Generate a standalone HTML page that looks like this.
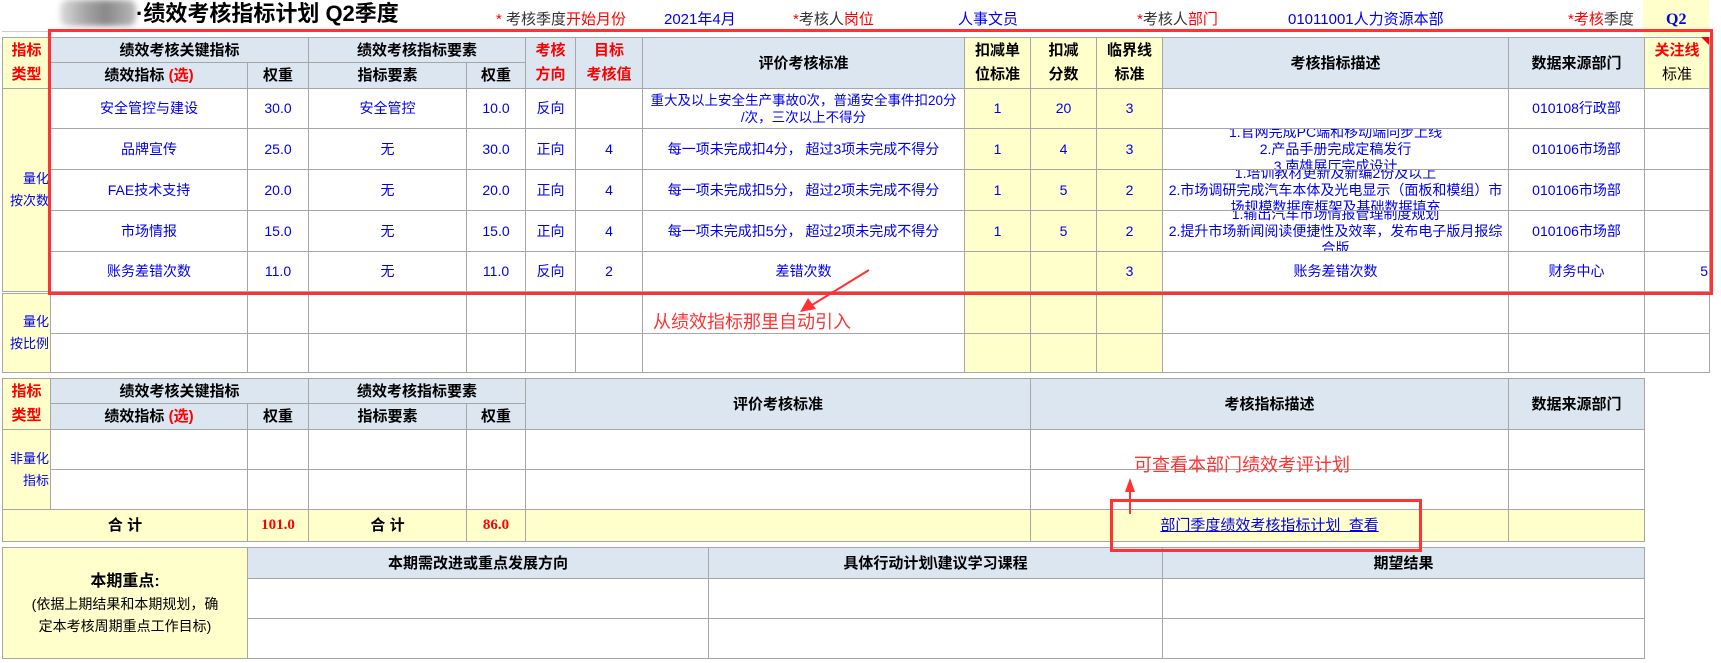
<!DOCTYPE html>
<html><head><meta charset="utf-8"><style>
*{margin:0;padding:0;box-sizing:border-box}
body{width:1721px;height:663px;background:#fff;position:relative;overflow:hidden;font-family:"Liberation Sans","Noto Sans CJK SC",sans-serif;font-size:14px;color:#0000ee}
table{position:absolute;border-collapse:collapse;table-layout:fixed}
td{border:1px solid #a6a6a6;text-align:center;vertical-align:middle;overflow:hidden;line-height:17px;padding:0 1px;white-space:nowrap}
.h{background:#dce6f1;color:#000;font-weight:bold;font-size:15px}
.y{background:#ffffcc}
.yh{background:#ffffcc;color:#000;font-weight:bold;font-size:15px}
.r{color:#ff0000}
.k{color:#000}
.lab{text-align:right;font-size:13px;line-height:22px;padding-right:1px}
.ds{font-size:14px;line-height:17px;white-space:nowrap}
.ds div{height:40px;overflow:hidden;display:flex;flex-direction:column;justify-content:center}
.t{position:absolute;white-space:nowrap}
</style></head><body>
<div class="t" style="left:60px;top:0;width:76px;height:26px;background:linear-gradient(90deg,#ddd,#aaa 30%,#888 60%,#bbb);filter:blur(3px);border-radius:8px"></div>
<div class="t" style="left:136px;top:0px;font-size:22px;font-weight:bold;color:#000;line-height:28px">·绩效考核指标计划 Q2季度</div>
<div class="t" style="left:496px;top:9px;font-size:15px;color:#333;line-height:22px"><span class="r">*</span> 考核季度<span class="r">开始月份</span></div>
<div class="t" style="left:664px;top:9px;font-size:15px;line-height:22px">2021年4月</div>
<div class="t" style="left:793px;top:9px;font-size:15px;color:#333;line-height:22px"><span class="r">*</span>考核人<span class="r">岗位</span></div>
<div class="t" style="left:958px;top:9px;font-size:15px;line-height:22px">人事文员</div>
<div class="t" style="left:1137px;top:9px;font-size:15px;color:#333;line-height:22px"><span class="r">*</span>考核人<span class="r">部门</span></div>
<div class="t" style="left:1288px;top:9px;font-size:15px;line-height:22px">01011001人力资源本部</div>
<div class="t" style="left:1568px;top:9px;font-size:15px;color:#333;line-height:22px"><span class="r">*考核</span>季度</div>
<div class="t" style="left:1643px;top:0;width:66px;height:36px;background:#ffffcc"></div>
<div class="t" style="left:1666px;top:9px;font-size:16px;font-weight:bold;line-height:22px;font-family:'Liberation Serif',serif">Q2</div>
<div class="t" style="left:642px;top:31px;width:115px;border-top:1px solid #ccc"></div>
<div class="t" style="left:882px;top:31px;width:214px;border-top:1px solid #ccc"></div>
<div class="t" style="left:1227px;top:31px;width:260px;border-top:1px solid #ccc"></div>
<div class="t" style="left:2px;top:31px;width:465px;border-top:1px solid #ccc"></div>

<table style="left:2px;top:37px;width:1707px">
<colgroup><col style="width:48px"><col style="width:197px"><col style="width:61px"><col style="width:158px"><col style="width:59px"><col style="width:50px"><col style="width:67px"><col style="width:322px"><col style="width:66px"><col style="width:66px"><col style="width:66px"><col style="width:346px"><col style="width:136px"><col style="width:65px"></colgroup>
<tr style="height:25px"><td rowspan="2" class="yh r" style="line-height:24px">指标<br>类型</td><td colspan="2" class="h">绩效考核关键指标</td><td colspan="2" class="h">绩效考核指标要素</td><td rowspan="2" class="h r" style="line-height:24px">考核<br>方向</td><td rowspan="2" class="h r" style="line-height:24px">目标<br>考核值</td><td rowspan="2" class="h">评价考核标准</td><td rowspan="2" class="yh" style="line-height:24px">扣减单<br>位标准</td><td rowspan="2" class="yh" style="line-height:24px">扣减<br>分数</td><td rowspan="2" class="yh" style="line-height:24px">临界线<br>标准</td><td rowspan="2" class="h">考核指标描述</td><td rowspan="2" class="h">数据来源部门</td><td rowspan="2" class="yh" style="line-height:24px"><span class="r">关注线</span><br><span style="font-weight:normal">标准</span></td></tr>
<tr style="height:26px"><td class="h">绩效指标 <span class="r">(选)</span></td><td class="h">权重</td><td class="h">指标要素</td><td class="h">权重</td></tr>
<tr style="height:40px"><td rowspan="5" class="y lab">量化<br>按次数</td><td>安全管控与建设</td><td>30.0</td><td>安全管控</td><td>10.0</td><td>反向</td><td></td><td style="font-size:13.5px">重大及以上安全生产事故0次，普通安全事件扣20分<br>/次，三次以上不得分</td><td class="y">1</td><td class="y">20</td><td class="y">3</td><td></td><td>010108行政部</td><td></td></tr>
<tr style="height:40px"><td>品牌宣传</td><td>25.0</td><td>无</td><td>30.0</td><td>正向</td><td>4</td><td>每一项未完成扣4分， 超过3项未完成不得分</td><td class="y">1</td><td class="y">4</td><td class="y">3</td><td class="ds"><div>1.官网完成PC端和移动端同步上线<br>2.产品手册完成定稿发行<br>3.南雄展厅完成设计</div></td><td>010106市场部</td><td></td></tr>
<tr style="height:40px"><td>FAE技术支持</td><td>20.0</td><td>无</td><td>20.0</td><td>正向</td><td>4</td><td>每一项未完成扣5分， 超过2项未完成不得分</td><td class="y">1</td><td class="y">5</td><td class="y">2</td><td class="ds"><div>1.培训教材更新及新编2份及以上<br>2.市场调研完成汽车本体及光电显示（面板和模组）市<br>场规模数据库框架及基础数据填充</div></td><td>010106市场部</td><td></td></tr>
<tr style="height:40px"><td>市场情报</td><td>15.0</td><td>无</td><td>15.0</td><td>正向</td><td>4</td><td>每一项未完成扣5分， 超过2项未完成不得分</td><td class="y">1</td><td class="y">5</td><td class="y">2</td><td class="ds"><div>1.输出汽车市场情报管理制度规划<br>2.提升市场新闻阅读便捷性及效率，发布电子版月报综<br>合版</div></td><td>010106市场部</td><td></td></tr>
<tr style="height:40px"><td>账务差错次数</td><td>11.0</td><td>无</td><td>11.0</td><td>反向</td><td>2</td><td>差错次数</td><td class="y"></td><td class="y"></td><td class="y">3</td><td>账务差错次数</td><td>财务中心</td><td style="text-align:right">5</td></tr>
</table>

<table style="left:2px;top:293px;width:1707px">
<colgroup><col style="width:48px"><col style="width:197px"><col style="width:61px"><col style="width:158px"><col style="width:59px"><col style="width:50px"><col style="width:67px"><col style="width:322px"><col style="width:66px"><col style="width:66px"><col style="width:66px"><col style="width:346px"><col style="width:136px"><col style="width:65px"></colgroup>
<tr style="height:40px"><td rowspan="2" class="y lab">量化<br>按比例</td><td></td><td></td><td></td><td></td><td></td><td></td><td></td><td class="y"></td><td class="y"></td><td class="y"></td><td></td><td></td><td></td></tr>
<tr style="height:39px"><td></td><td></td><td></td><td></td><td></td><td></td><td></td><td class="y"></td><td class="y"></td><td class="y"></td><td></td><td></td><td></td></tr>
</table>

<table style="left:2px;top:378px;width:1642px">
<colgroup><col style="width:48px"><col style="width:197px"><col style="width:61px"><col style="width:158px"><col style="width:59px"><col style="width:505px"><col style="width:478px"><col style="width:136px"></colgroup>
<tr style="height:25px"><td rowspan="2" class="yh r" style="line-height:24px">指标<br>类型</td><td colspan="2" class="h">绩效考核关键指标</td><td colspan="2" class="h">绩效考核指标要素</td><td rowspan="2" class="h">评价考核标准</td><td rowspan="2" class="h">考核指标描述</td><td rowspan="2" class="h">数据来源部门</td></tr>
<tr style="height:26px"><td class="h">绩效指标 <span class="r">(选)</span></td><td class="h">权重</td><td class="h">指标要素</td><td class="h">权重</td></tr>
<tr style="height:40px"><td rowspan="2" class="y lab">非量化<br>指标</td><td></td><td></td><td></td><td></td><td></td><td></td><td></td></tr>
<tr style="height:40px"><td></td><td></td><td></td><td></td><td></td><td></td><td></td></tr>
<tr style="height:32px" class="y"><td colspan="2" class="yh">合 计</td><td class="y r" style="font-weight:bold;font-size:15px;font-family:'Liberation Serif',serif">101.0</td><td class="yh">合 计</td><td class="y r" style="font-weight:bold;font-size:15px;font-family:'Liberation Serif',serif">86.0</td><td class="y"></td><td class="y"><span style="text-decoration:underline;color:#0000ee;font-size:15px">部门季度绩效考核指标计划&nbsp; 查看</span></td><td class="y"></td></tr>
</table>

<table style="left:2px;top:547px;width:1642px">
<colgroup><col style="width:245px"><col style="width:461px"><col style="width:454px"><col style="width:482px"></colgroup>
<tr style="height:31px"><td rowspan="3" class="y k" style="line-height:22px;font-size:14px"><b style="font-size:16px">本期重点:</b><br>(依据上期结果和本期规划，确<br>定本考核周期重点工作目标)</td><td class="h">本期需改进或重点发展方向</td><td class="h">具体行动计划\建议学习课程</td><td class="h">期望结果</td></tr>
<tr style="height:40px"><td></td><td></td><td></td></tr>
<tr style="height:40px"><td></td><td></td><td></td></tr>
</table>

<div class="t" style="left:48px;top:29px;width:1665px;height:266px;border:3px solid #f33"></div>
<div class="t" style="left:1110px;top:499px;width:312px;height:53px;border:3px solid #f33"></div>
<div class="t" style="left:653px;top:309px;font-size:18px;color:#f33;line-height:26px">从绩效指标那里自动引入</div>
<div class="t" style="left:1134px;top:452px;font-size:18px;color:#f33;line-height:26px">可查看本部门绩效考评计划</div>
<svg class="t" style="left:0;top:0" width="1721" height="663">
<line x1="869" y1="270" x2="812" y2="305" stroke="#f33" stroke-width="2"/>
<polygon points="800,312 808,298 816,309" fill="#f33"/>
<line x1="1130" y1="514" x2="1130" y2="488" stroke="#f33" stroke-width="2"/>
<polygon points="1130,478 1125,492 1135,492" fill="#f33"/>
<polygon points="1701,37 1709,37 1709,45" fill="#f00"/>
</svg>
</body></html>
